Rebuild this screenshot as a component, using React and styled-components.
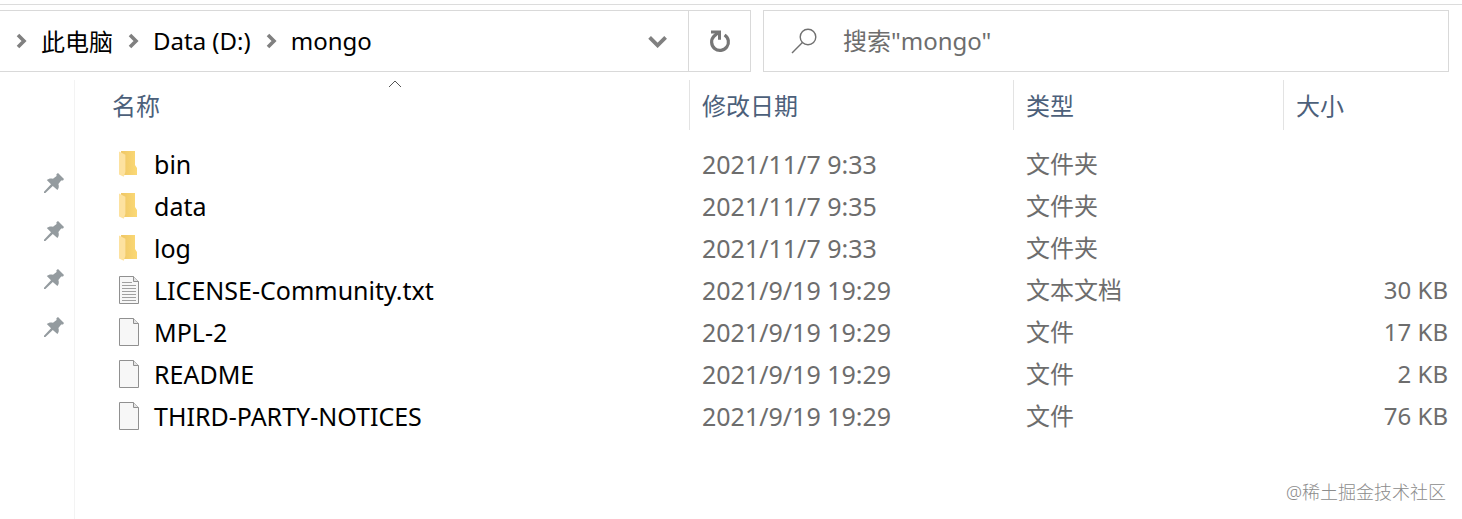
import React from "react";
import styled, { createGlobalStyle } from "styled-components";

const GlobalStyle = createGlobalStyle`
  * {
    box-sizing: border-box;
  }

  body {
    margin: 0;
    background: #fff;
    color: #000;
    font-family: "Noto Sans", "Noto Sans CJK SC", sans-serif;
    font-size: 24px;
  }

  button,
  input {
    font: inherit;
  }
`;

const Page = styled.div`
  position: relative;
  display: flex;
  flex-direction: column;
  gap: 8px;
  min-height: 100vh;
  padding-top: 4px;
`;

const Toolbar = styled.header`
  display: grid;
  grid-template-columns: 751fr 686fr;
  gap: 12px;
  padding: 5px 13px 0 0;
  border-top: 1px solid #dcdcdc;
`;

const AddressBar = styled.div`
  display: flex;
  align-items: stretch;
  height: 62px;
  border: 1px solid #d9d9d9;
  border-left: none;
`;

const Crumbs = styled.nav`
  display: flex;
  flex: 1;
  align-items: center;
  gap: 14px;
  padding-left: 15px;
`;

const Crumb = styled.a`
  padding-bottom: 2px;
  color: #000;
  text-decoration: none;
  white-space: nowrap;
`;

const IconButton = styled.button`
  display: flex;
  align-items: center;
  justify-content: center;
  width: 62px;
  padding: 0;
  border: none;
  border-left: ${(props) => (props.$divided ? "1px solid #d9d9d9" : "none")};
  background: none;
  cursor: pointer;
`;

const SearchBox = styled.label`
  display: flex;
  align-items: center;
  gap: 26px;
  height: 62px;
  padding-left: 27px;
  border: 1px solid #d9d9d9;
`;

const SearchInput = styled.input`
  flex: 1;
  min-width: 0;
  padding: 0 0 2px;
  border: none;
  outline: none;
  background: none;

  &::placeholder {
    color: #6d6d6d;
    opacity: 1;
  }
`;

const Content = styled.main`
  display: flex;
  flex: 1;
`;

const QuickAccess = styled.aside`
  display: flex;
  flex-direction: column;
  align-items: flex-end;
  gap: 28px;
  width: 75px;
  padding: 93px 10px 0 0;
  border-right: 1px solid #f3f3f3;
`;

const FileTable = styled.table`
  flex: 1;
  align-self: flex-start;
  table-layout: fixed;
  border-collapse: collapse;
  margin: 0 14px 0 25px;
`;

const HeadCell = styled.th`
  position: relative;
  width: ${(props) => props.$width || "auto"};
  padding: 0 0 13px;
  font-weight: 400;
`;

const HeadButton = styled.button`
  display: block;
  width: 100%;
  height: 50px;
  padding: 0 12px 2px;
  border: none;
  border-right: ${(props) => (props.$last ? "none" : "1px solid #e3e3e3")};
  background: none;
  color: #4c607a;
  text-align: left;
  cursor: pointer;
`;

const SortMark = styled.svg`
  position: absolute;
  top: 0;
  left: 50%;
  transform: translateX(-50%);
`;

const Cell = styled.td`
  height: 42px;
  padding: 0 0 0 12px;
  color: #6d6d6d;
  font-size: ${(props) => (props.$latin ? "25px" : "24px")};
  line-height: 32px;
  text-align: ${(props) => props.$align || "left"};
  white-space: nowrap;
`;

const FileName = styled.div`
  display: flex;
  align-items: center;
  gap: 14px;
  padding-left: 6px;
  color: #000;
`;

const Watermark = styled.div`
  position: absolute;
  right: 16px;
  bottom: 14px;
  color: #8c8c8c;
  font-size: 18px;
  font-weight: 300;
  line-height: 26px;
`;

const CrumbArrow = () => (
  <svg width="12" height="16" viewBox="0 0 12 16" aria-hidden="true">
    <path d="M3 2l6 6-6 6" fill="none" stroke="#808080" strokeWidth="3.6" />
  </svg>
);

const ChevronDown = () => (
  <svg width="20" height="14" viewBox="0 0 20 14" aria-hidden="true">
    <path d="M2.6 3.4l8 8 8-8" fill="none" stroke="#808080" strokeWidth="3.8" />
  </svg>
);

const RefreshIcon = () => (
  <svg width="22" height="24" viewBox="0 0 22 24" aria-hidden="true">
    <path
      d="M15.6 6A8.4 8.4 0 1 1 5 7.2L8.6 4"
      fill="none"
      stroke="#767676"
      strokeWidth="3.2"
    />
    <path d="M2 1.4h10v9.4h-3V5.4L6.6 4.4H2z" fill="#767676" />
  </svg>
);

const SearchIcon = () => (
  <svg width="26" height="26" viewBox="0 0 26 26" aria-hidden="true">
    <g fill="none" stroke="#707070" strokeWidth="1.4">
      <circle cx="17" cy="9" r="7.8" />
      <path d="M11.4 14.6L1 25" />
    </g>
  </svg>
);

const PinIcon = () => (
  <svg width="20" height="20" viewBox="0 0 20 20" aria-hidden="true">
    <path
      d="M14 0L20 6L19 7.6L17.2 7.6L14.4 11C15.2 13.6 14.8 15.6 13.4 17L8.8 13L1.4 20H0V18.8L7 11.2L2.8 7C4.6 5.4 6.8 5 9 5.8L12.6 3L12.4 1.2Z"
      fill="#949b9f"
    />
  </svg>
);

const FolderIcon = () => (
  <svg width="22" height="30" viewBox="0 0 22 30" aria-hidden="true">
    <defs>
      <linearGradient id="folderBack">
        <stop offset="0" stopColor="#efc765" />
        <stop offset="1" stopColor="#fbd976" />
      </linearGradient>
    </defs>
    <path d="M3 2h14v14l2 3v7H4z" fill="url(#folderBack)" />
    <path d="M1 2.4l6.4 3.4v17l-1.6 5L1 25.4z" fill="#fde2a0" />
  </svg>
);

const FileIcon = ({ lined }) => (
  <svg width="22" height="30" viewBox="0 0 22 30" aria-hidden="true">
    <path d="M1.5 1.5h14l5 5v22h-19z" fill="#f7f7f7" stroke="#909090" />
    <path d="M15.5 1.5v5h5" fill="#e4e4e4" stroke="#909090" />
    {lined && (
      <path
        d="M4 7.5h10M4 10.5h14M4 13.5h14M4 16.5h14M4 19.5h14M4 22.5h14M4 25.5h14"
        stroke="#a0a0a0"
      />
    )}
  </svg>
);

const crumbs = ["此电脑", "Data (D:)", "mongo"];

const columns = [
  { title: "名称", sorted: true },
  { title: "修改日期", width: "324px" },
  { title: "类型", width: "270px" },
  { title: "大小", width: "164px" },
];

const files = [
  { name: "bin", date: "2021/11/7 9:33", type: "文件夹", kind: "folder" },
  { name: "data", date: "2021/11/7 9:35", type: "文件夹", kind: "folder" },
  { name: "log", date: "2021/11/7 9:33", type: "文件夹", kind: "folder" },
  {
    name: "LICENSE-Community.txt",
    date: "2021/9/19 19:29",
    type: "文本文档",
    size: "30 KB",
    kind: "text",
  },
  { name: "MPL-2", date: "2021/9/19 19:29", type: "文件", size: "17 KB" },
  { name: "README", date: "2021/9/19 19:29", type: "文件", size: "2 KB" },
  {
    name: "THIRD-PARTY-NOTICES",
    date: "2021/9/19 19:29",
    type: "文件",
    size: "76 KB",
  },
];

const App = () => {
  return (
    <>
      <GlobalStyle />
      <Page>
        <Toolbar>
          <AddressBar>
            <Crumbs>
              {crumbs.map((crumb) => (
                <React.Fragment key={crumb}>
                  <CrumbArrow />
                  <Crumb href="#">{crumb}</Crumb>
                </React.Fragment>
              ))}
            </Crumbs>
            <IconButton aria-label="展开">
              <ChevronDown />
            </IconButton>
            <IconButton $divided aria-label="刷新">
              <RefreshIcon />
            </IconButton>
          </AddressBar>
          <SearchBox>
            <SearchIcon />
            <SearchInput
              type="text"
              aria-label="搜索"
              placeholder={'搜索"mongo"'}
            />
          </SearchBox>
        </Toolbar>
        <Content>
          <QuickAccess>
            <PinIcon />
            <PinIcon />
            <PinIcon />
            <PinIcon />
          </QuickAccess>
          <FileTable>
            <thead>
              <tr>
                {columns.map(({ title, width, sorted }, i) => (
                  <HeadCell key={title} $width={width}>
                    {sorted && (
                      <SortMark width="14" height="8" viewBox="0 0 14 8">
                        <path d="M1 7l6-6 6 6" fill="none" stroke="#555" />
                      </SortMark>
                    )}
                    <HeadButton $last={i === columns.length - 1}>
                      {title}
                    </HeadButton>
                  </HeadCell>
                ))}
              </tr>
            </thead>
            <tbody>
              {files.map(({ name, date, type, size, kind }) => (
                <tr key={name}>
                  <Cell $latin>
                    <FileName>
                      {kind === "folder" ? (
                        <FolderIcon />
                      ) : (
                        <FileIcon lined={kind === "text"} />
                      )}
                      {name}
                    </FileName>
                  </Cell>
                  <Cell $latin>{date}</Cell>
                  <Cell>{type}</Cell>
                  <Cell $align="right">{size}</Cell>
                </tr>
              ))}
            </tbody>
          </FileTable>
        </Content>
        <Watermark>@稀土掘金技术社区</Watermark>
      </Page>
    </>
  );
};

export default App;
